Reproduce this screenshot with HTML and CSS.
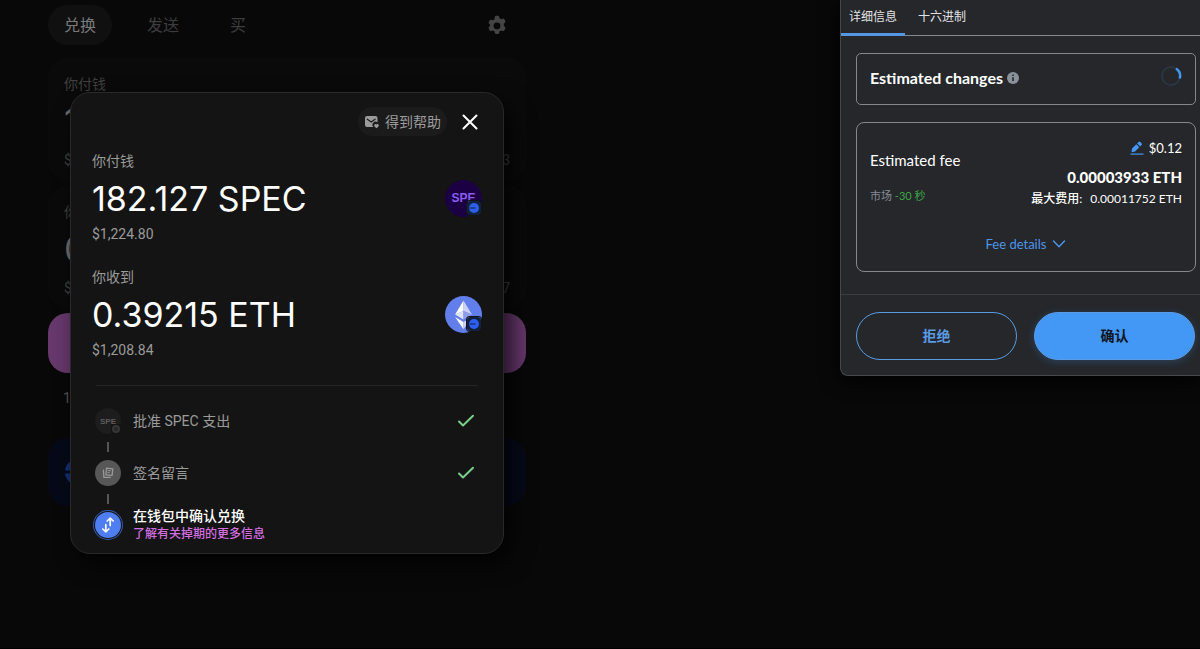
FILE: index.html
```html
<!DOCTYPE html>
<html lang="zh-CN">
<head>
<meta charset="utf-8">
<meta name="viewport" content="width=device-width, initial-scale=1">
<title>兑换</title>
<link rel="stylesheet" href="styles.css">
</head>
<body>
<main class="swap">
  <nav class="swap-tabs">
    <button class="swap-tab active" type="button">兑换</button>
    <button class="swap-tab" type="button">发送</button>
    <button class="swap-tab" type="button">买</button>
    <button class="settings" type="button" aria-label="设置">
      <svg width="22" height="22" viewBox="0 0 20 20"><path fill="currentColor" fill-rule="evenodd" d="M8 1.6C8.2.9 8.6.6 9.2.6h1.6c.6 0 1 .3 1.2 1l.3 1.4 1.4.8 1.5-.5c.6-.2 1.1 0 1.4.5l.9 1.5c.3.5.2 1-.2 1.5l-1.100 1.100v1.900l1.100 1.100c.4.5.5 1 .2 1.500l-.9 1.600c-.3.500-.8.700-1.400.500l-1.500-.500-1.400.800-.3 1.500c-.2.700-.6 1-1.200 1H9.200c-.6 0-1-.3-1.200-1l-.3-1.500-1.400-.8-1.500.5c-.6.200-1.100 0-1.400-.5l-.9-1.600c-.3-.5-.2-1 .2-1.500l1.100-1.100V8.900L2.700 7.800c-.4-.5-.5-1-.2-1.500l.9-1.500c.3-.5.8-.7 1.400-.5l1.500.5L7.700 4zM10 6.800a3.100 3.100 0 1 0 0 6.200 3.100 3.100 0 0 0 0-6.200z"/></svg>
    </button>
  </nav>
  <section class="field">
    <span class="field-label">你付钱</span>
    <span class="field-amount">1</span>
    <div class="field-foot"><span>$</span><span>3</span></div>
  </section>
  <section class="field">
    <span class="field-label">你</span>
    <span class="field-amount">0</span>
    <div class="field-foot"><span>$</span><span>7</span></div>
  </section>
  <div class="swap-submit"></div>
  <div class="rate">1</div>
  <div class="network">
    <svg width="26" height="26" viewBox="0 0 26 26"><circle cx="13" cy="13" r="13" fill="#123079"/><path d="M0 13h18" stroke="#060a18" stroke-width="3"/></svg>
  </div>
</main>

<section class="dialog" role="dialog" aria-label="确认兑换">
  <header class="dialog-head">
    <button class="help" type="button">
      <svg width="16" height="14" viewBox="0 0 16 14"><path fill="currentColor" d="M3 1h8.500A2 2 0 0 1 13.500 3v4.500a3 3 0 0 0-4 4.500H3a2 2 0 0 1-2-2V3a2 2 0 0 1 2-2z"/><path d="M3.300 4.200l3.900 2.700 3.900-2.700" fill="none" stroke="#1b1b1b" stroke-width="1.200" stroke-linecap="round"/><path fill="currentColor" d="M12.500 13.200c-1.400-1-2.300-1.700-2.300-2.900 0-1.300 1.600-1.900 2.300-.8.700-1.100 2.300-.5 2.300.8 0 1.200-.9 1.900-2.300 2.900z"/></svg>
      得到帮助
    </button>
    <button class="close" type="button" aria-label="关闭">
      <svg width="16" height="16" viewBox="0 0 16 16"><path d="M1.500 1.500l13 13m0-13l-13 13" stroke="currentColor" stroke-width="2" stroke-linecap="round"/></svg>
    </button>
  </header>
  <div class="token">
    <div class="token-info">
      <span class="token-label">你付钱</span>
      <strong class="token-amount">182.127 SPEC</strong>
      <span class="token-value">$1,224.80</span>
    </div>
    <div class="token-logo spec">SPE
      <svg class="badge" width="14" height="14" viewBox="0 0 14 14"><rect width="14" height="14" rx="3" fill="#12213d"/><circle cx="7" cy="7" r="5" fill="#2c5ff0"/><path d="M2.500 7h6" stroke="#12213d"/></svg>
    </div>
  </div>
  <div class="token">
    <div class="token-info">
      <span class="token-label">你收到</span>
      <strong class="token-amount">0.39215 ETH</strong>
      <span class="token-value">$1,208.84</span>
    </div>
    <div class="token-logo eth">
      <svg width="37" height="37" viewBox="0 0 37 37"><path fill="#fff" d="M18.500 4.500v10.400l-8.400 3.700z"/><path fill="#c9d2f6" d="M18.500 4.500l8.400 14.100-8.400-3.700z"/><path fill="#dfe4fa" d="M10.100 18.600l8.400-3.700v8.700z"/><path fill="#8d9dea" d="M26.900 18.600l-8.400-3.700v8.700z"/><path fill="#fff" d="M10.100 21l8.400 4.900v7.300z"/><path fill="#c9d2f6" d="M26.900 21l-8.400 4.900v7.300z"/></svg>
      <svg class="badge" width="14" height="14" viewBox="0 0 14 14"><rect width="14" height="14" rx="3" fill="#12213d"/><circle cx="7" cy="7" r="5" fill="#2c5ff0"/><path d="M2.500 7h6" stroke="#12213d"/></svg>
    </div>
  </div>
  <hr class="rule">
  <ol class="steps">
    <li class="step">
      <span class="step-icon muted">SPE
        <svg class="mini-badge" width="10" height="10" viewBox="0 0 10 10"><rect width="10" height="10" rx="2" fill="#141414"/><circle cx="5" cy="5" r="3" fill="#262626" stroke="#363636" stroke-width="2"/></svg>
      </span>
      <span class="step-text">批准 SPEC 支出</span>
      <svg class="check" width="18" height="14" viewBox="0 0 18 14"><path d="M2 7.500l4 4L16 1.800" fill="none" stroke="currentColor" stroke-width="2" stroke-linecap="round" stroke-linejoin="round"/></svg>
    </li>
    <li class="step">
      <span class="step-icon sign">
        <svg width="12" height="12" viewBox="0 0 12 12" fill="none" stroke="currentColor"><path d="M4.500 1.200l6.300.6-.7 6.600-6.200-.6z" stroke-width="1.300" stroke-linejoin="round"/><path d="M5.800 3.500l3 .3M5.600 5.500l2 .2"/><path d="M1.400 3.200l.5 7.200h6.300" stroke-width="1.300" stroke-linecap="round" stroke-linejoin="round"/></svg>
      </span>
      <span class="step-text">签名留言</span>
      <svg class="check" width="18" height="14" viewBox="0 0 18 14"><path d="M2 7.500l4 4L16 1.800" fill="none" stroke="currentColor" stroke-width="2" stroke-linecap="round" stroke-linejoin="round"/></svg>
    </li>
    <li class="step current">
      <span class="step-icon swap-icon">
        <svg width="14" height="16" viewBox="0 0 14 16" fill="none" stroke="currentColor" stroke-width="1.700" stroke-linecap="round" stroke-linejoin="round"><path d="M9.200 8.500V1.300M6.200 4l3-2.800 3 2.800M4.800 7.500v7.200M1.800 12l3 2.800 3-2.800"/></svg>
      </span>
      <span class="step-text">在钱包中确认兑换<a class="learn" href="#">了解有关掉期的更多信息</a></span>
    </li>
  </ol>
</section>

<aside class="wallet">
  <nav class="wallet-tabs">
    <button class="wallet-tab active" type="button">详细信息</button>
    <button class="wallet-tab" type="button">十六进制</button>
  </nav>
  <div class="wallet-body">
    <section class="changes">
      <h2 class="changes-title">Estimated changes</h2>
      <svg width="12" height="12" viewBox="0 0 12 12"><circle cx="6" cy="6" r="6" fill="#8b919b"/><path d="M6 5.200v3.800M6 2.600v1.400" stroke="#24272a" stroke-width="1.600"/></svg>
      <svg class="spinner" width="22" height="22" viewBox="0 0 22 22" fill="none"><circle cx="11" cy="11" r="9" stroke="#2a3644" stroke-width="2"/><path d="M16 3.500a9 9 0 0 1 3.700 10" stroke="#4397f5" stroke-width="2.500"/></svg>
    </section>
    <section class="fee">
      <div class="fee-row">
        <div class="fee-left">
          <span class="fee-title">Estimated fee</span>
          <span class="fee-speed">市场 <em class="fee-time">-30 秒</em></span>
        </div>
        <div class="fee-right">
          <span class="fee-usd">
            <svg width="14" height="14" viewBox="0 0 14 14" fill="#4397f5"><path d="M1.500 10.500l.6-3 4.200-4.200 3 3-4.200 4.200-3 .7zM7.200 2.400l1.300-1.300c.6-.6 1.300-.6 1.900 0l1.100 1.100c.6.600.6 1.300 0 1.900l-1.300 1.300z"/><path d="M.5 12.500h13v1.200H.5z"/></svg>
            $0.12
          </span>
          <strong class="fee-eth">0.00003933 ETH</strong>
          <span class="fee-max"><b>最大费用:</b><span>0.00011752 ETH</span></span>
        </div>
      </div>
      <button class="fee-more" type="button">Fee details
        <svg width="14" height="10" viewBox="0 0 14 10"><path d="M1.500 2L7 7.700 12.500 2" fill="none" stroke="currentColor" stroke-width="1.500" stroke-linecap="round"/></svg>
      </button>
    </section>
  </div>
  <footer class="wallet-foot">
    <button class="reject" type="button">拒绝</button>
    <button class="confirm" type="button">确认</button>
  </footer>
</aside>
</body>
</html>
```

FILE: styles.css
```css
* { box-sizing: border-box; }

html { background: #080808; }

body {
  position: relative;
  margin: 0;
  min-height: 100vh;
  border-bottom: 1px solid #000;
  font-family: Roboto, "Noto Sans CJK SC", sans-serif;
  font-size: 14px;
  line-height: 20px;
}

button {
  display: inline-flex;
  align-items: center;
  justify-content: center;
  margin: 0;
  padding: 0;
  border: 0;
  background: none;
  color: inherit;
  font: inherit;
}

svg { flex: none; }

/* Dimmed swap form behind the dialog */
.swap {
  display: flex;
  flex-direction: column;
  gap: 4px;
  max-width: 526px;
  padding: 5px 0 0 48px;
}

.swap-tabs {
  display: flex;
  align-items: center;
  gap: 19px;
  margin-bottom: 8px;
  padding-right: 18px;
  color: #3d3d3d;
  font-size: 16px;
}

.swap-tab { height: 40px; padding: 2px 16px 0; border-radius: 20px; }
.swap-tab.active { background: #101010; color: #797979; }
.settings { margin-left: auto; padding-top: 2px; color: #444; }

.field {
  display: flex;
  flex-direction: column;
  padding: 17px 16px 11px;
  border-radius: 20px;
  background: #0a0a0a;
  color: #404040;
}

.field-amount { margin: 3px 0 4px; color: #6b6b6b; font-family: Inter, sans-serif; font-size: 36px; line-height: 49px; }
.field-foot { display: flex; justify-content: space-between; }

.swap-submit { height: 60px; border-radius: 20px; background: #66386c; }
.rate { padding: 11px 15px; color: #555; }

.network {
  display: flex;
  align-items: center;
  height: 68px;
  margin-top: 15px;
  padding-left: 17px;
  border-radius: 20px;
  background: #060a18;
}

/* Review dialog */
.dialog {
  position: absolute;
  top: 92px;
  left: 70px;
  width: 434px;
  padding: 14px 21px 15px;
  border: 1px solid #292929;
  border-radius: 20px;
  background: #141414;
  box-shadow: 8px 10px 22px rgba(0, 0, 0, 0.7);
  color: #9b9b9b;
}

.dialog-head {
  display: flex;
  align-items: center;
  justify-content: flex-end;
  gap: 15px;
  margin-bottom: 15px;
  padding-right: 4px;
}

.help { gap: 5px; height: 29px; padding: 0 6px; border-radius: 15px; background: #1b1b1b; }
.close { color: #fff; }

.token { display: flex; align-items: center; justify-content: space-between; margin-bottom: 22px; }
.token-info { display: flex; flex-direction: column; }
.token-label { margin-bottom: 4px; }
.token-amount { color: #fff; font-family: Inter, sans-serif; font-size: 34px; font-weight: 400; line-height: 48px; }
.token-value { line-height: 22px; }

.token-logo {
  position: relative;
  display: flex;
  align-items: center;
  justify-content: center;
  width: 37px;
  height: 37px;
  border-radius: 50%;
  font-family: "Liberation Sans", sans-serif;
  font-size: 12px;
  font-weight: 700;
}

.spec { background: #1c0044; color: #8a5cf0; }
.eth { background: #627eea; }
.badge { position: absolute; right: 1px; bottom: 2px; border-radius: 3px; box-shadow: 0 0 0 1px #141414; }

.rule { margin: 24px 4px 22px; border: 0; border-top: 1px solid #242424; }

.steps { display: flex; flex-direction: column; gap: 26px; margin: 0; padding: 0 7px 0 3px; list-style: none; }
.step { position: relative; display: flex; align-items: center; gap: 12px; height: 26px; }

.step + .step::before {
  content: "";
  position: absolute;
  top: -18px;
  left: 12px;
  width: 2px;
  height: 10px;
  background: #555;
}

.step-icon {
  position: relative;
  display: flex;
  flex: none;
  align-items: center;
  justify-content: center;
  width: 26px;
  height: 26px;
  border-radius: 50%;
}

.muted { background: #1d1d1d; color: #5c5c5c; font: 700 8px "Liberation Sans", sans-serif; }
.mini-badge { position: absolute; right: 0; bottom: 0; }
.sign { background: #575757; color: #999; }
.swap-icon { background: #4f7df2; color: #fff; box-shadow: 0 0 0 1px #141414, 0 0 0 2px #3559ad; }
.step-text { flex: 1; }
.current .step-text { color: #fff; font-weight: 500; line-height: 18px; }
.learn { display: block; color: #d46fe0; font-size: 12px; text-decoration: none; }
.check { color: #78cf8c; }

/* Wallet confirmation popup */
.wallet {
  position: absolute;
  top: 0;
  right: 0;
  width: 360px;
  border: solid #46484c;
  border-width: 0 0 1px 1px;
  border-radius: 0 0 0 8px;
  background: #25272b;
  box-shadow: 0 4px 20px #000;
  color: #fff;
  font-family: Lato, "Noto Sans CJK SC", sans-serif;
}

.wallet-tabs { display: flex; gap: 5px; border-bottom: 1px solid #85878c; font-size: 12px; }
.wallet-tab { height: 36px; margin-bottom: -1px; padding: 0 8px; border-bottom: 3px solid transparent; color: #e3e3e4; }
.wallet-tab.active { border-color: #5596e3; }

.wallet-body { display: flex; flex-direction: column; gap: 17px; padding: 17px 4px 22px 15px; }
.changes, .fee { border: 1px solid #85878c; }
.changes { display: flex; align-items: center; gap: 4px; height: 52px; padding: 0 13px 2px; border-radius: 5px; }
.changes-title { margin: 0; font-size: 16px; }
.spinner { margin: 0 0 4px auto; }

.fee { padding: 15px 13px 17px; border-radius: 8px; }
.fee-row { display: flex; justify-content: space-between; margin-bottom: 23px; }
.fee-left { display: flex; flex-direction: column; gap: 16px; padding-top: 12px; }
.fee-title { font-size: 15px; }
.fee-speed { color: #858b94; font-size: 11px; }
.fee-time { color: #3fa648; font-style: normal; }
.fee-right { display: flex; flex-direction: column; align-items: flex-end; }
.fee-usd { display: flex; align-items: center; gap: 5px; margin-bottom: 9px; font-size: 13px; }
.fee-eth { font-size: 15px; font-weight: 900; }
.fee-max { display: flex; gap: 8px; font-size: 12px; line-height: 24px; }
.fee-max b { font-weight: 500; }
.fee-more { display: flex; gap: 6px; margin: 0 auto; color: #4d95e8; font-size: 13px; }

.wallet-foot { display: grid; grid-template-columns: 1fr 1fr; gap: 17px; padding: 17px 5px 15px 15px; border-top: 1px solid #3b3d41; }
.reject, .confirm { height: 48px; border: 1px solid #5a9be4; border-radius: 24px; font-weight: 700; }
.reject { color: #5a9be4; }
.confirm { background: #4397f5; color: #10151c; box-shadow: 0 2px 8px rgba(67, 151, 245, 0.25); }
```
